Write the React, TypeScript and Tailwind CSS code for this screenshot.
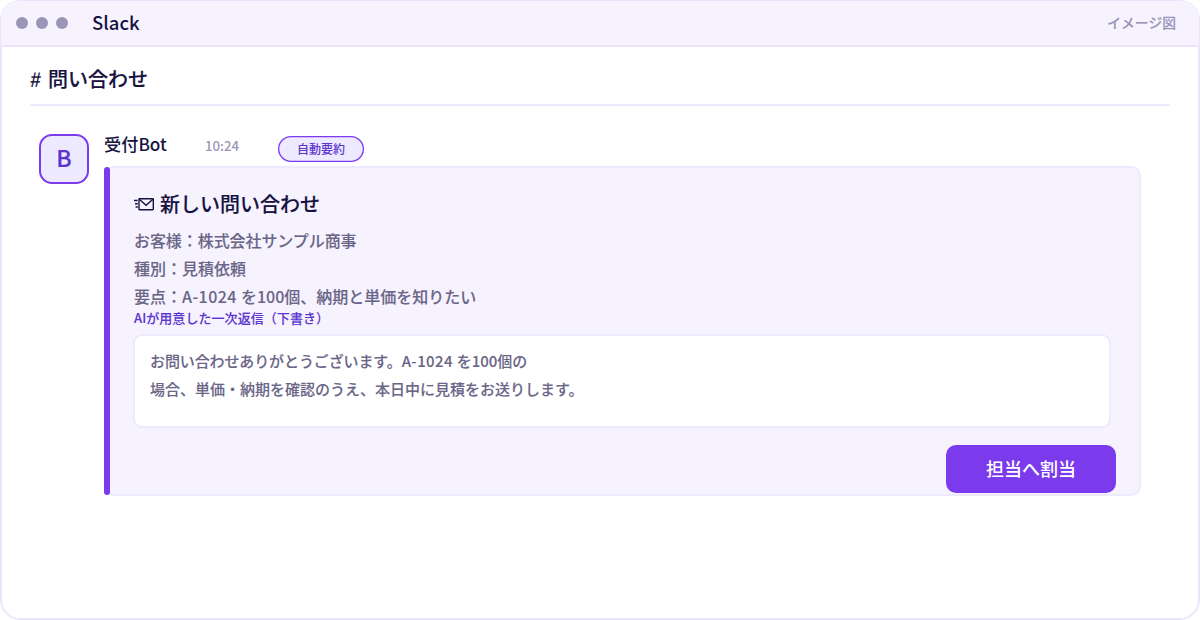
import React from "react";

function MailIcon() {
  return (
    <svg width="20" height="14" viewBox="0 0 20 14" fill="none" stroke="#17123f" strokeWidth="1.4" className="shrink-0">
      <rect x="5" y="1.7" width="14.3" height="11" rx="0.4" />
      <path d="M5.3 2.2l6.8 6 6.8-6" />
      <path d="M0 3.5h3.6M1 6.8h2.8M1.6 10h2.2" />
    </svg>
  );
}

function TitleBar() {
  return (
    <header className="flex h-[46px] shrink-0 items-center border-b-2 border-[#e9e4fb] bg-[#f6f3ff] pl-[15px] pr-[23px]">
      <div className="flex gap-2">
        <span className="size-3 rounded-full bg-[#9b95b8]" />
        <span className="size-3 rounded-full bg-[#9b95b8]" />
        <span className="size-3 rounded-full bg-[#9b95b8]" />
      </div>
      <span className="-mt-[3px] ml-6 text-[18.5px] leading-6 font-medium">Slack</span>
      <span className="-mt-[2px] ml-auto text-[13.8px] leading-5 font-medium text-[#9b95b8] [-webkit-text-stroke:0.15px]">
        イメージ図
      </span>
    </header>
  );
}

function MessageCard() {
  return (
    <section className="flex h-[330px] w-[1037px] rounded-[10px] border-2 border-l-0 border-[#ede9fe] bg-[#f6f3ff]">
      <div className="-my-px w-[6px] shrink-0 rounded-[3px] bg-[#7c3aed]" />
      <div className="flex grow flex-col pl-6">
        <h2 className="mt-[21px] flex h-[30px] items-center gap-[6px] text-[20px] leading-[30px] font-medium [-webkit-text-stroke:0.15px]">
          <MailIcon />
          <span>新しい問い合わせ</span>
        </h2>
        <div className="mt-[7px] text-[16px] leading-7 font-medium text-[#6b6687] [-webkit-text-stroke:0.1px]">
          <p className="tracking-[-0.07px]">お客様：株式会社サンプル商事</p>
          <p>種別：見積依頼</p>
          <p>
            要点：<span className="tracking-[0.45px]">A-1024 </span>を100個、納期と単価を知りたい
          </p>
        </div>
        <p className="-mt-[1px] text-[13px] leading-[18px] font-medium tracking-[0.06px] text-[#5b35d0] [-webkit-text-stroke:0.1px]">
          AIが用意した一次返信（下書き）
        </p>
        <div className="mt-[7px] -ml-px h-[94px] w-[978px] rounded-[9px] border-2 border-[#ede9fe] bg-white px-[15px] pt-[11px] text-[15px] leading-7 font-medium text-[#6b6687] [-webkit-text-stroke:0.1px]">
          <p>
            <span className="tracking-[-0.11px]">お問い合わせありがとうございます。</span>
            <span className="tracking-[0.4px]">A-1024 </span>を100個の
          </p>
          <p>場合、単価・納期を確認のうえ、本日中に見積をお送りします。</p>
        </div>
        <button className="mt-[17px] mr-[23px] h-12 w-[170px] shrink-0 self-end rounded-[10px] bg-[#7c3aed] pb-[2px] text-[18px] leading-6 font-medium text-white">
          担当へ割当
        </button>
      </div>
    </section>
  );
}

export default function App() {
  return (
    <div className="flex h-[620px] w-[1200px] flex-col overflow-hidden rounded-[20px] border border-[#e9e4fb] bg-white font-['Noto_Sans_CJK_JP',sans-serif] text-[#17123f]">
      <TitleBar />
      <main className="flex grow flex-col rounded-b-[19px] border-x border-b border-[#e9e4fb] px-7">
        <h1 className="flex h-[59px] items-center gap-[7px] border-b-2 border-[#ede9fe] pt-[6px] text-[20px] leading-7 font-medium [-webkit-text-stroke:0.15px]">
          <span className="w-[11px] -skew-x-6 font-normal">#</span>
          <span>問い合わせ</span>
        </h1>
        <div className="flex pl-[9px] pt-[27px]">
          <div className="mt-px flex size-[50px] shrink-0 items-center justify-center rounded-[13px] border-2 border-[#7c3aed] bg-[#ede9fe] pb-[3px] text-[23px] leading-none font-medium text-[#5b35d0] [-webkit-text-stroke:0.2px]">
            B
          </div>
          <div className="ml-[15px] flex flex-col">
            <div className="flex h-[33px] items-start">
              <span className="-mt-px w-[101px] text-[17.2px] leading-6 font-medium">受付Bot</span>
              <span className="mt-[3px] w-[73px] text-[13.2px] leading-5 font-medium text-[#9b95b8]">10:24</span>
              <span className="mt-[3px] flex h-[26px] w-[86px] items-center justify-center rounded-full bg-[#ede9fe] text-[12px] leading-4 font-medium text-[#5b35d0] shadow-[inset_0_0_0_1.3px_#7c3aed]">
                自動要約
              </span>
            </div>
            <MessageCard />
          </div>
        </div>
      </main>
    </div>
  );
}
